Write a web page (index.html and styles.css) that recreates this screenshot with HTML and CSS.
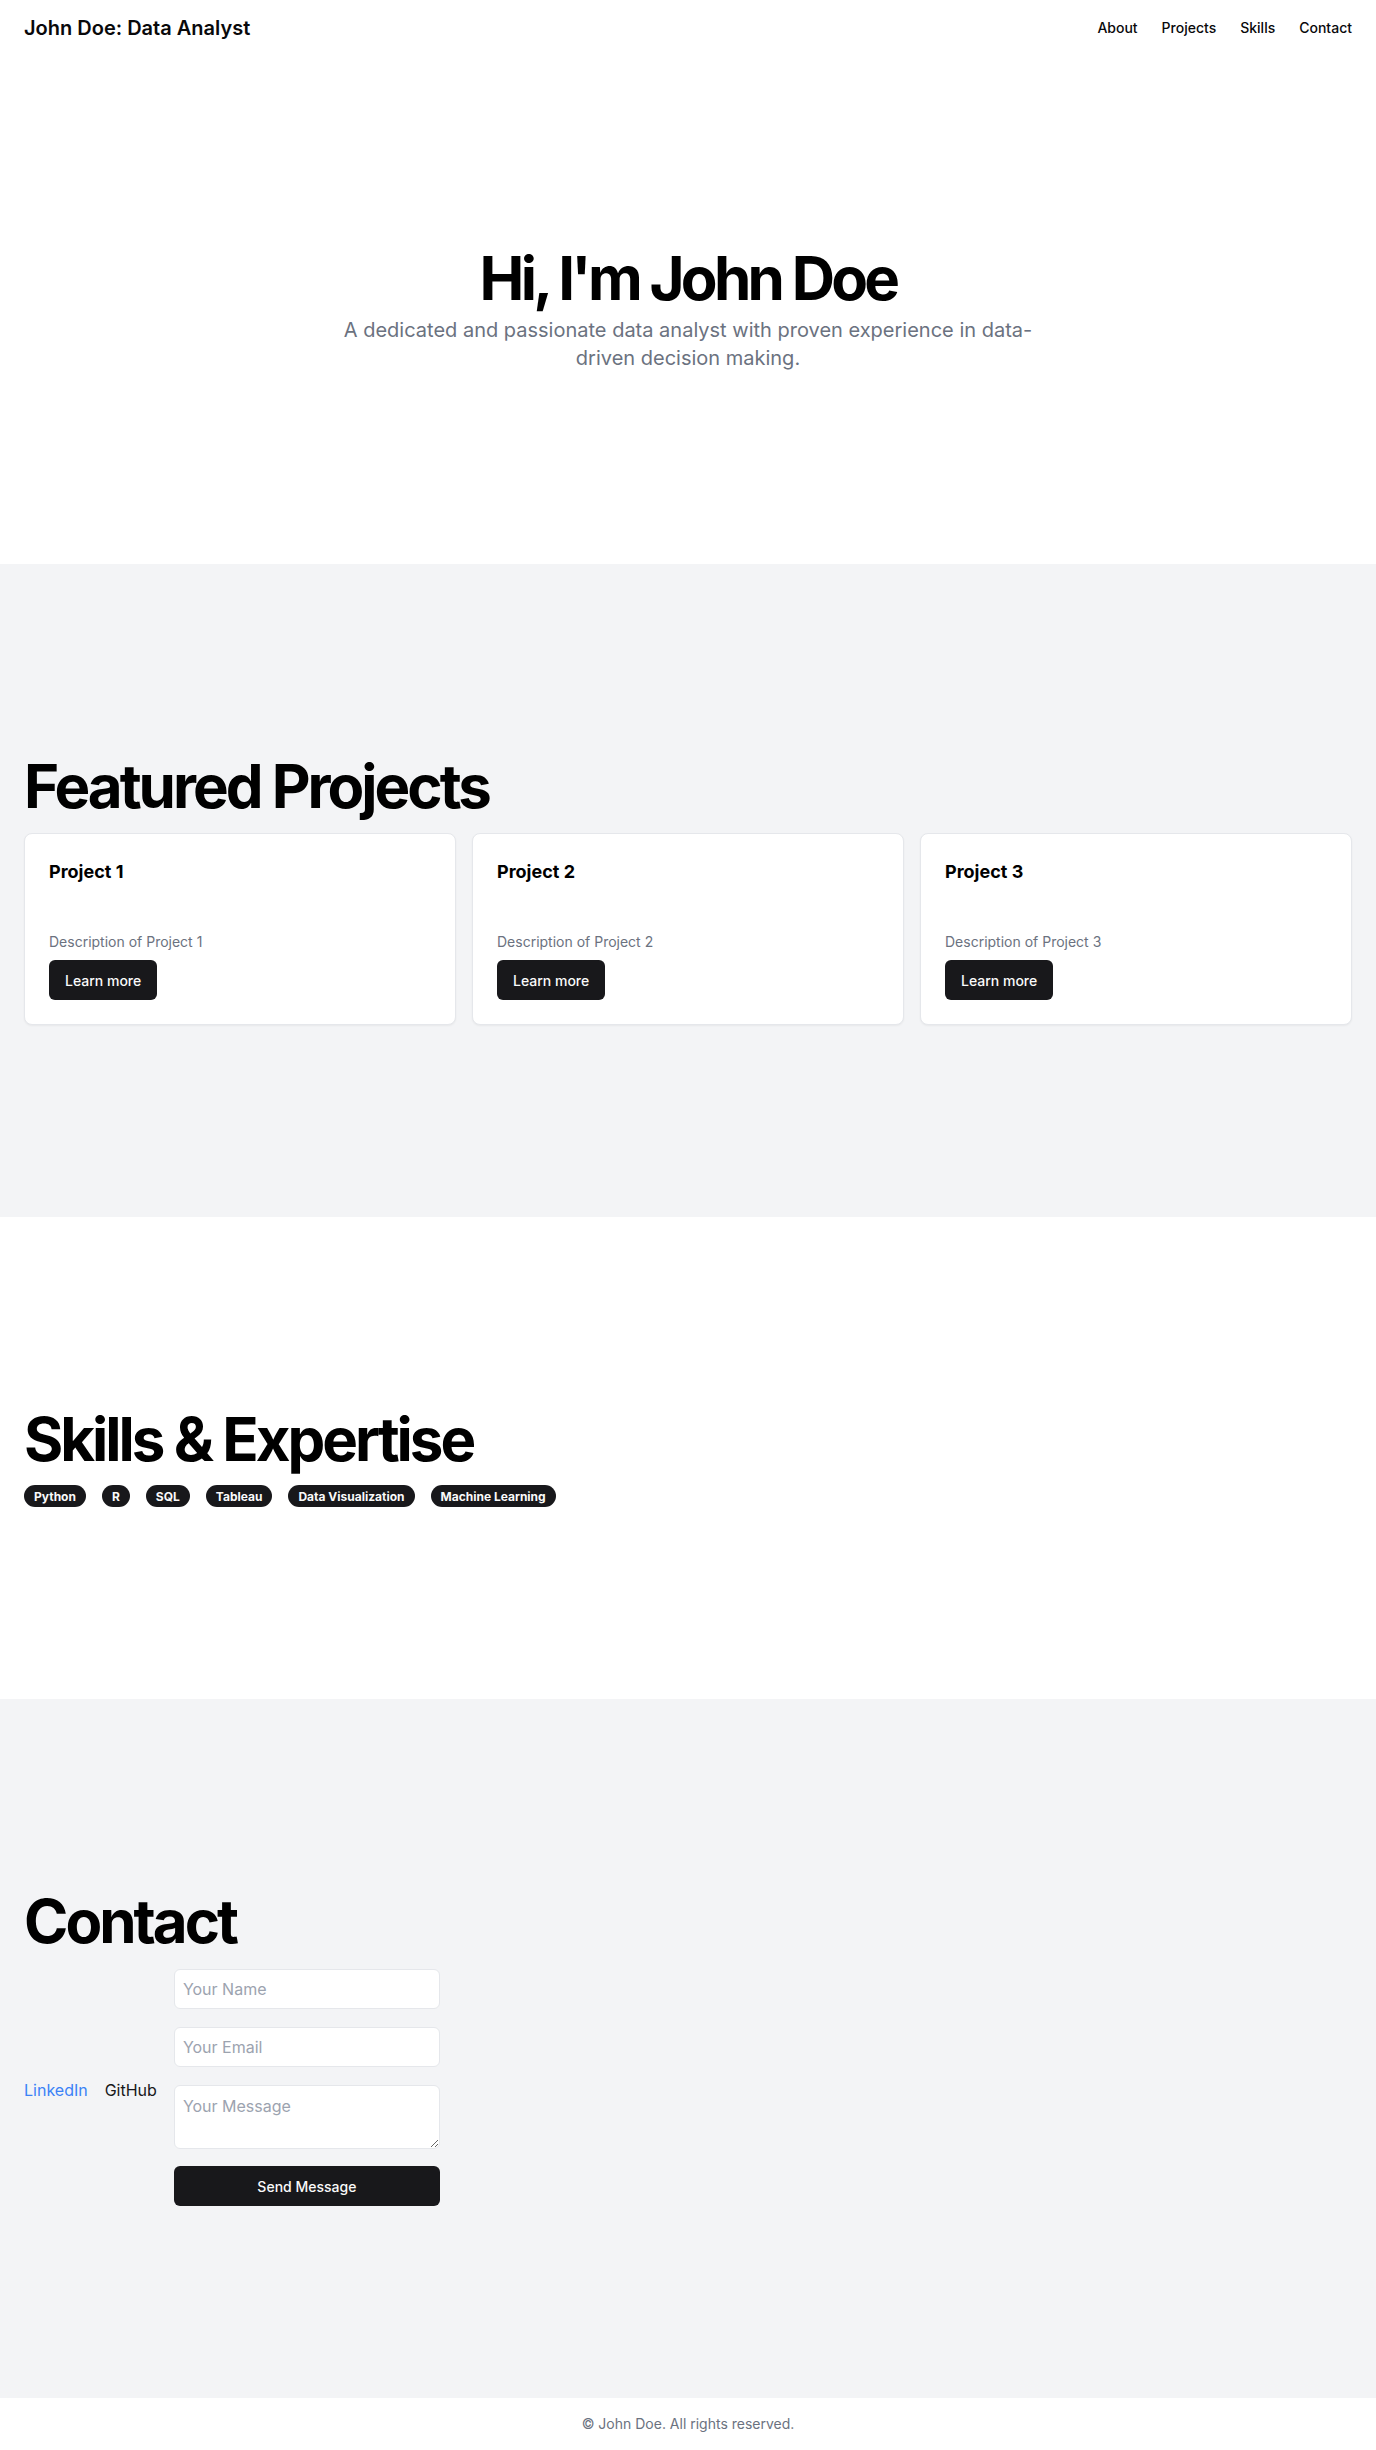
FILE: index.html
```html
<!DOCTYPE html>
<html lang="en">
<head>
<meta charset="utf-8">
<title>John Doe: Data Analyst</title>
<link rel="stylesheet" href="styles.css">
</head>
<body>
<header class="site-header">
  <a class="brand" href="#">John Doe: Data Analyst</a>
  <nav class="nav">
    <a href="#about">About</a>
    <a href="#projects">Projects</a>
    <a href="#skills">Skills</a>
    <a href="#contact">Contact</a>
  </nav>
</header>
<main>
  <section class="section hero" id="about">
    <div class="container hero-inner">
      <h1 class="hero-title">Hi, I'm John Doe</h1>
      <p class="hero-sub">A dedicated and passionate data analyst with proven experience in data-driven decision making.</p>
    </div>
  </section>

  <section class="section gray" id="projects">
    <div class="container">
      <h2 class="section-title">Featured Projects</h2>
      <div class="cards">
        <div class="card">
          <h3 class="card-title">Project 1</h3>
          <p class="card-desc">Description of Project 1</p>
          <button class="btn">Learn more</button>
        </div>
        <div class="card">
          <h3 class="card-title">Project 2</h3>
          <p class="card-desc">Description of Project 2</p>
          <button class="btn">Learn more</button>
        </div>
        <div class="card">
          <h3 class="card-title">Project 3</h3>
          <p class="card-desc">Description of Project 3</p>
          <button class="btn">Learn more</button>
        </div>
      </div>
    </div>
  </section>

  <section class="section" id="skills">
    <div class="container">
      <h2 class="section-title">Skills &amp; Expertise</h2>
      <div class="badges">
        <span class="badge">Python</span>
        <span class="badge">R</span>
        <span class="badge">SQL</span>
        <span class="badge">Tableau</span>
        <span class="badge">Data Visualization</span>
        <span class="badge">Machine Learning</span>
      </div>
    </div>
  </section>

  <section class="section gray" id="contact">
    <div class="container">
      <h2 class="section-title">Contact</h2>
      <div class="contact-row">
        <div class="links">
          <a class="link-blue" href="#">LinkedIn</a>
          <a class="link-dark" href="#">GitHub</a>
        </div>
        <form class="form">
          <input class="field" type="text" placeholder="Your Name">
          <input class="field" type="email" placeholder="Your Email">
          <textarea class="field area" placeholder="Your Message"></textarea>
          <button class="btn btn-full" type="button">Send Message</button>
        </form>
      </div>
    </div>
  </section>
</main>
<footer class="footer">
  <p>© John Doe. All rights reserved.</p>
</footer>
</body>
</html>
```

FILE: styles.css
```css
* { box-sizing: border-box; }

html, body {
  margin: 0;
  padding: 0;
  background: #ffffff;
  color: #09090b;
  font-family: Inter, "Noto Sans", "Liberation Sans", sans-serif;
}

a { text-decoration: none; color: inherit; }

.site-header {
  height: 56px;
  padding: 0 24px;
  display: flex;
  align-items: center;
}

.brand {
  font-size: 20px;
  line-height: 28px;
  font-weight: 600;
  color: #09090b;
}

.nav {
  margin-left: auto;
  display: flex;
  gap: 24px;
}

.nav a {
  font-size: 14px;
  line-height: 20px;
  font-weight: 500;
  color: #09090b;
}

.section {
  padding: 192px 0;
  background: #ffffff;
}

.section.gray { background: #f3f4f6; }

.container { padding: 0 24px; }

.hero-inner {
  display: flex;
  flex-direction: column;
  align-items: center;
  text-align: center;
}

.hero-title {
  margin: 0;
  font-size: 60px;
  line-height: 1;
  font-weight: 700;
  letter-spacing: -0.062em;
  color: #000;
}

.hero-sub {
  margin: 8px 0 0;
  max-width: 700px;
  font-size: 20px;
  line-height: 28px;
  color: #6b7280;
}

.section-title {
  margin: 0;
  font-size: 60px;
  line-height: 1;
  font-weight: 700;
  letter-spacing: -0.05em;
  color: #000;
}

.cards {
  margin-top: 17px;
  display: grid;
  grid-template-columns: repeat(3, 1fr);
  gap: 16px;
}

.card {
  background: #ffffff;
  border: 1px solid #e5e7eb;
  border-radius: 8px;
  box-shadow: 0 1px 2px rgba(0, 0, 0, 0.05);
  padding: 24px;
  display: flex;
  flex-direction: column;
  align-items: flex-start;
}

.card-title {
  margin: 0;
  font-size: 18px;
  line-height: 28px;
  font-weight: 700;
  color: #000;
}

.card-desc {
  margin: 46px 0 0;
  font-size: 14px;
  line-height: 20px;
  color: #6b7280;
}

.btn {
  margin-top: 8px;
  height: 40px;
  padding: 0 16px;
  border: none;
  border-radius: 6px;
  background: #18181b;
  color: #fafafa;
  font-family: inherit;
  font-size: 14px;
  font-weight: 500;
  cursor: pointer;
}

.badges {
  margin-top: 16px;
  display: flex;
  flex-wrap: wrap;
  gap: 16px;
}

.badge {
  display: inline-flex;
  align-items: center;
  height: 22px;
  padding: 0 10px;
  border-radius: 9999px;
  background: #18181b;
  color: #fafafa;
  font-size: 12px;
  font-weight: 700;
}

.contact-row {
  margin-top: 18px;
  display: flex;
  align-items: center;
  gap: 17px;
}

.links {
  display: flex;
  gap: 17px;
  padding-top: 5px;
  font-size: 16px;
  line-height: 24px;
}

.link-blue { color: #3b82f6; }
.link-dark { color: #18181b; }

.form {
  width: 266px;
  display: flex;
  flex-direction: column;
  gap: 18px;
}

.field {
  display: block;
  width: 100%;
  height: 40px;
  padding: 8px 8px;
  border: 1px solid #e5e7eb;
  border-radius: 6px;
  background: #ffffff;
  font-family: inherit;
  font-size: 16px;
  color: #09090b;
  outline: none;
}

.field::placeholder { color: #9ca3af; }

.area {
  height: 64px;
  resize: vertical;
  line-height: 24px;
}

.btn-full {
  margin-top: -1px;
  width: 100%;
}

.footer {
  padding: 16px 24px;
  text-align: center;
  background: #ffffff;
}

.footer p {
  margin: 0;
  font-size: 14px;
  line-height: 20px;
  color: #6b7280;
}
```
